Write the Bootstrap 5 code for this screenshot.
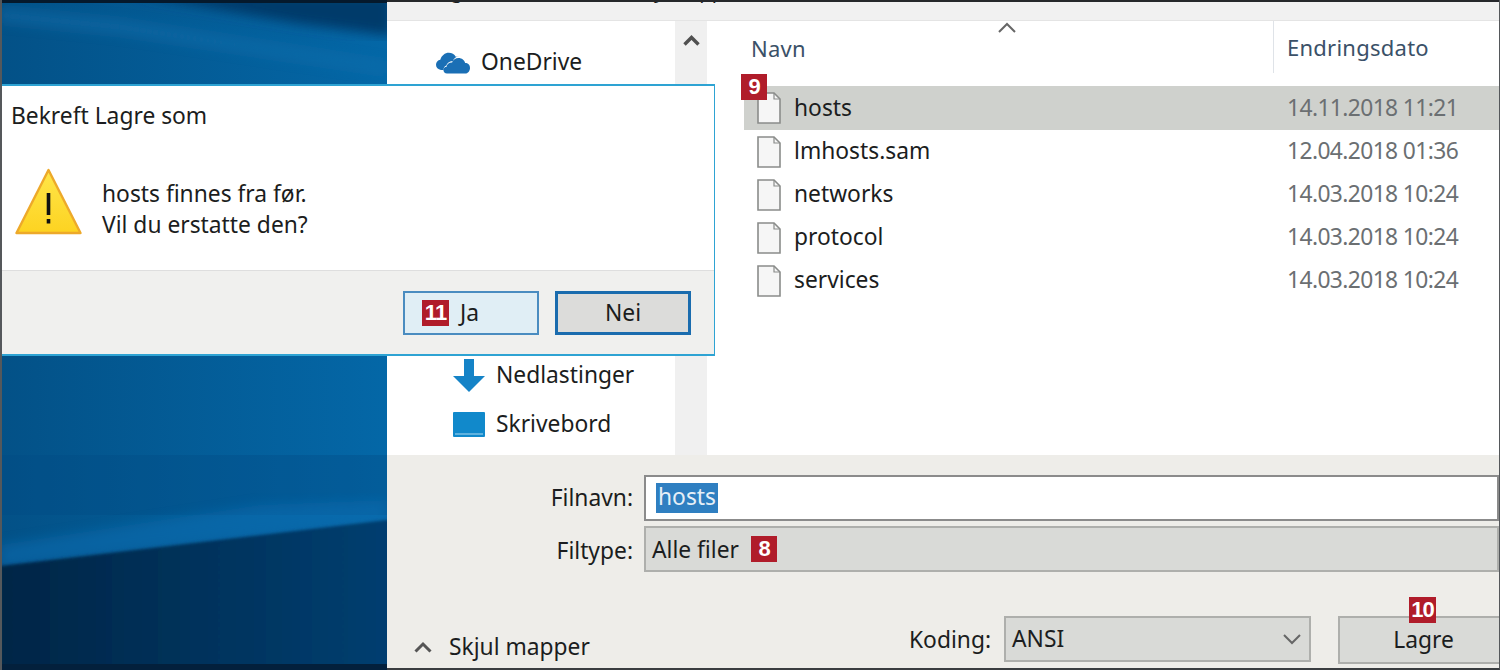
<!DOCTYPE html>
<html lang="no">
<head>
<meta charset="utf-8">
<title>Lagre som</title>
<link href="https://cdn.jsdelivr.net/npm/bootstrap@5.3.0/dist/css/bootstrap.min.css" rel="stylesheet">
<style>
html,body{margin:0;height:670px;overflow:hidden;background:#012a55}
body,.form-control,.btn{font-family:"Noto Sans","Open Sans",sans-serif;font-size:22.8px;color:#1b1d20}
.desk{width:1500px;height:670px;overflow:hidden}
.wall{left:0;top:0;width:1500px;height:670px}
.win-save{left:387px;top:0;width:1113px;height:670px;border-bottom:2px solid #3a3d40;border-right:1px solid #55585b;background:#eeede9}
.strip{height:21px;background:#f1f1f1;overflow:hidden;border-top:2px solid #26282b;border-bottom:1px solid #e4e4e4;gap:118px;padding-left:40px;font-size:20px;line-height:24px}
.strip span{margin-top:-23px;display:block}
.main{height:434px;background:#fff}
.side{width:288px;padding-top:17px}
.nav-row{height:49px;gap:11px}
.nav-one{padding-left:49px}
.nav-low{padding-left:66px}
.nav-gap{margin-top:264px}
.ico-nav{width:32px;flex:none}
.ico-cloud{width:34px}
.scroll-col{width:32px;background:#f0f0f0;padding-top:14px}
.list-col{min-width:0}
.head-row{height:52px;color:#3b5168;font-size:22px;letter-spacing:.25px}
.h-name{width:566px;padding-left:44px;padding-top:2px}
.h-date{padding-left:13px;border-left:1px solid #dfe3e8;height:52px;padding-top:10px}
.sort-mark{left:291px;top:1px;width:18px;height:11px}
.rows{margin-top:13px;padding-left:37px}
.file-row{height:43px;padding-left:13px}
.file-row.sel{background:#cfd1cd;height:44px}
.ico-file{width:24px;height:32px;flex:none}
.f-name{width:506px;padding-left:13px;flex:none}
.f-date{color:#6b6f72;letter-spacing:-.6px;white-space:nowrap}
.panel{padding-top:20px}
.form-line{height:51px}
.f-label{width:257px;flex:none;text-align:right;padding-right:11px;line-height:1}
.form-control.name-box{height:46px;border:2px solid #8b8b8b;border-radius:0;padding:0 0 0 10px;box-shadow:none;background:#fff;min-width:0;flex:1 1 0}
.name-sel{background:#2f7fc1;color:#e6eff7;padding:0 2px;height:30px;line-height:28px;display:inline-block}
.type-box{height:46px;background:#d9dad7;border:2px solid #aeafac;padding-left:6px;gap:12px;min-width:0}
.type-text{padding-top:3px}
.tag-red{background:#b01c2a;color:#fff;font-family:"Liberation Sans",sans-serif;font-weight:700;font-size:22px;line-height:1;width:26px;height:26px;letter-spacing:-1px;flex:none}
.tag-9{top:74px}
.tag-10{top:597px;width:27px;z-index:2}
.tail{margin-top:39px;height:48px}
.fold{padding-left:27px;gap:17px;width:522px;padding-top:20px;line-height:1;flex:none}
.kod{width:95px;flex:none}
.enc-box{width:307px;height:46px;background:#d9dad7;border:2px solid #aeafac;padding:0 7px 0 6px;flex:none}
.btn.save-btn{width:162px;height:48px;margin-left:27px;background:#d9dad7;border:2px solid #aeafac;border-radius:0;padding:0 0 0 8px;color:#1b1d20;border-right:0;line-height:1}
.win-msg{left:0;top:84px;width:715px;height:272px;background:#fff;border:2px solid #2ea3d3;border-left:0;border-right-width:1px}
.msg-top{height:185px;padding:15px 11px 0}
.msg-title{line-height:30px}
.msg-body{margin-top:37px;gap:19px;padding-left:4px}
.ico-warn{width:68px;height:68px;flex:none}
.msg-text{line-height:31px;margin-top:10px;white-space:nowrap}
.msg-foot{height:85px;background:#f0f0ee;border-top:1px solid #dedede;padding-right:23px;gap:16px;padding-top:20px}
.btn.msg-btn{width:136px;height:44px;border-radius:0;padding:2px 0 0;color:#1b1d20;font-size:22.8px}
.btn.yes{background:#e0eef5;border:2px solid #4a8cc0;gap:11px;padding:0 0 0 17px}
.btn.yes .tag-red{width:27px}
.ja-text{padding-top:2px}
.btn.no{background:#dcdcda;border:3px solid #1a6cae}
.left-edge{left:0;top:0;width:2px;height:670px;background:#55585b}
</style>
</head>
<body>
<div class="desk position-relative">
  <svg class="wall position-absolute" viewBox="0 0 1500 670" preserveAspectRatio="none" aria-hidden="true">
    <defs>
      <linearGradient id="g1" x1="0" y1="0" x2="1" y2="0"><stop offset="0" stop-color="#035187"/><stop offset="1" stop-color="#0468a8"/></linearGradient>
      <linearGradient id="g2" x1="0" y1="0" x2="1" y2="0"><stop offset="0" stop-color="#022546"/><stop offset="1" stop-color="#013f71"/></linearGradient>
      <filter id="bl"><feGaussianBlur stdDeviation="6"/></filter>
      <filter id="bl2"><feGaussianBlur stdDeviation="1.500"/></filter>
    </defs>
    <rect width="400" height="670" fill="url(#g1)"/>
    <polygon points="0,8 120,20 387,62 387,74 120,34 0,22" fill="#1670ad" opacity=".5" filter="url(#bl)"/>
    <polygon points="130,-6 392,-6 392,36 300,24" fill="#033a6b" filter="url(#bl)"/>
    <rect y="0" width="400" height="3" fill="#05192c"/>
    <rect y="455" width="400" height="60" fill="#024a84" opacity=".35"/>
    <polygon points="0,545 260,505 387,500 387,522 0,568" fill="#0a6fb5" opacity=".5" filter="url(#bl)"/>
    <polygon points="0,566 387,520 400,520 400,670 0,670" fill="url(#g2)" filter="url(#bl2)"/>
    <rect x="0" y="664" width="400" height="6" fill="#03203c"/>
  </svg>

  <section class="win-save position-absolute d-flex flex-column">
    <div class="strip d-flex"><span>Organiser</span><span>Ny mappe</span></div>
    <div class="main d-flex flex-shrink-0 position-relative">
      <aside class="side flex-shrink-0">
        <div class="nav-row nav-one d-flex align-items-center">
          <svg class="ico-cloud flex-shrink-0" width="34" height="22" viewBox="0 0 34 22" aria-hidden="true"><path d="M5 18c-3-.5-5-2.500-5-5.200 0-2.600 1.800-4.600 4.300-5C5.500 3.500 9 .8 12.800.8c3 0 5.600 1.600 7 4 1-.5 2-.7 3-.6-3 .4-5.300 2.300-6 5-3-.2-6 1.800-6.300 4.300-1.800.4-3 1.900-2.900 4.500z" fill="#1a6fb5"/><path d="M11 21.500c-2.200 0-3.600-1.500-3.600-3.400 0-1.800 1.300-3.200 3.200-3.400.2-2.600 2.600-4.500 5.500-4.300 1-2.800 3.500-4.500 6.400-4.500 3.400 0 6 2.200 6.700 5.200 2.700 0 4.800 2 4.800 4.800 0 2.900-2 5.600-5 5.600z" fill="#1a6fb5"/></svg>
          <span>OneDrive</span>
        </div>
        <div class="nav-row nav-low nav-gap d-flex align-items-center">
          <svg class="ico-nav" width="32" height="34" viewBox="0 0 32 34" aria-hidden="true"><path d="M11 0h10v17h11L16 33 0 17h11z" fill="#1583c7"/></svg>
          <span>Nedlastinger</span>
        </div>
        <div class="nav-row nav-low d-flex align-items-center">
          <svg class="ico-nav" width="32" height="25" viewBox="0 0 32 25" aria-hidden="true"><rect width="32" height="25" rx="1" fill="#1189cb"/><rect x="2" y="21" width="28" height="2" fill="#5fb2df"/></svg>
          <span>Skrivebord</span>
        </div>
      </aside>
      <div class="scroll-col flex-shrink-0 text-center">
        <svg width="17" height="11" viewBox="0 0 17 11" class="d-block mx-auto" aria-hidden="true"><path d="M1.500 9.500l7-7 7 7" fill="none" stroke="#505050" stroke-width="3.400"/></svg>
      </div>
      <div class="list-col flex-grow-1 position-relative">
        <svg class="sort-mark position-absolute" viewBox="0 0 18 11" aria-hidden="true"><path d="M1 10l8-8 8 8" fill="none" stroke="#666" stroke-width="2"/></svg>
        <div class="head-row d-flex">
          <div class="h-name d-flex align-items-center">Navn</div>
          <div class="h-date">Endringsdato</div>
        </div>
        <div class="rows">
          <div class="file-row sel d-flex align-items-center"><svg class="ico-file" viewBox="0 0 24 32" aria-hidden="true"><path d="M1 1h16l6 6v24H1z" fill="#f6f6f6" stroke="#8a8c8a" stroke-width="1.600"/><path d="M17 1v6h6" fill="none" stroke="#8a8c8a" stroke-width="1.200"/></svg><span class="f-name">hosts</span><span class="f-date">14.11.2018 11:21</span></div>
          <div class="file-row d-flex align-items-center"><svg class="ico-file" viewBox="0 0 24 32" aria-hidden="true"><path d="M1 1h16l6 6v24H1z" fill="#f6f6f6" stroke="#8a8c8a" stroke-width="1.600"/><path d="M17 1v6h6" fill="none" stroke="#8a8c8a" stroke-width="1.200"/></svg><span class="f-name">lmhosts.sam</span><span class="f-date">12.04.2018 01:36</span></div>
          <div class="file-row d-flex align-items-center"><svg class="ico-file" viewBox="0 0 24 32" aria-hidden="true"><path d="M1 1h16l6 6v24H1z" fill="#f6f6f6" stroke="#8a8c8a" stroke-width="1.600"/><path d="M17 1v6h6" fill="none" stroke="#8a8c8a" stroke-width="1.200"/></svg><span class="f-name">networks</span><span class="f-date">14.03.2018 10:24</span></div>
          <div class="file-row d-flex align-items-center"><svg class="ico-file" viewBox="0 0 24 32" aria-hidden="true"><path d="M1 1h16l6 6v24H1z" fill="#f6f6f6" stroke="#8a8c8a" stroke-width="1.600"/><path d="M17 1v6h6" fill="none" stroke="#8a8c8a" stroke-width="1.200"/></svg><span class="f-name">protocol</span><span class="f-date">14.03.2018 10:24</span></div>
          <div class="file-row d-flex align-items-center"><svg class="ico-file" viewBox="0 0 24 32" aria-hidden="true"><path d="M1 1h16l6 6v24H1z" fill="#f6f6f6" stroke="#8a8c8a" stroke-width="1.600"/><path d="M17 1v6h6" fill="none" stroke="#8a8c8a" stroke-width="1.200"/></svg><span class="f-name">services</span><span class="f-date">14.03.2018 10:24</span></div>
        </div>
      </div>
    </div>
    <div class="panel flex-grow-1">
      <div class="form-line d-flex align-items-start">
        <label class="f-label align-self-center pb-1">Filnavn:</label>
        <div class="form-control name-box d-flex align-items-center"><span class="name-sel">hosts</span></div>
      </div>
      <div class="form-line d-flex align-items-start">
        <span class="f-label align-self-center">Filtype:</span>
        <div class="type-box flex-grow-1 d-flex align-items-center"><span class="type-text">Alle filer</span><span class="tag-red d-flex align-items-center justify-content-center">8</span></div>
      </div>
      <div class="tail d-flex align-items-start">
        <div class="fold d-flex align-items-center">
          <svg width="18" height="12" viewBox="0 0 18 12" aria-hidden="true"><path d="M1.500 10.500L9 3l7.500 7.500" fill="none" stroke="#555" stroke-width="3"/></svg>
          <span>Skjul mapper</span>
        </div>
        <span class="kod align-self-center">Koding:</span>
        <div class="enc-box d-flex align-items-center justify-content-between"><span>ANSI</span><svg width="20" height="12" viewBox="0 0 20 12" aria-hidden="true"><path d="M2 2l8 8 8-8" fill="none" stroke="#666" stroke-width="2"/></svg></div>
        <button type="button" class="btn save-btn">Lagre</button>
      </div>
    </div>
  </section>

  <span class="tag-red tag-9 position-absolute d-flex align-items-center justify-content-center" style="left:741px">9</span>
  <span class="tag-red tag-10 position-absolute d-flex align-items-center justify-content-center" style="left:1409px">10</span>

  <section class="win-msg position-absolute d-flex flex-column">
    <div class="msg-top">
      <div class="msg-title">Bekreft Lagre som</div>
      <div class="msg-body d-flex">
        <svg class="ico-warn" viewBox="0 0 68 68" aria-hidden="true"><defs><linearGradient id="wy" x1="0" y1="0" x2="0" y2="1"><stop offset="0" stop-color="#ffe64a"/><stop offset="1" stop-color="#fdd321"/></linearGradient></defs><path d="M33.500 2L65.500 65H1.500z" fill="url(#wy)" stroke="#eda92a" stroke-width="2.400" stroke-linejoin="round"/><rect x="31.700" y="25" width="3.600" height="22" fill="#111"/><rect x="31.700" y="51" width="3.600" height="4.500" fill="#111"/></svg>
        <div class="msg-text">hosts finnes fra før.<br>Vil du erstatte den?</div>
      </div>
    </div>
    <div class="msg-foot d-flex justify-content-end align-items-start">
      <button type="button" class="btn msg-btn yes d-flex align-items-center"><span class="tag-red d-flex align-items-center justify-content-center">11</span><span class="ja-text">Ja</span></button>
      <button type="button" class="btn msg-btn no">Nei</button>
    </div>
  </section>
  <div class="left-edge position-absolute"></div>
</div>
</body>
</html>
